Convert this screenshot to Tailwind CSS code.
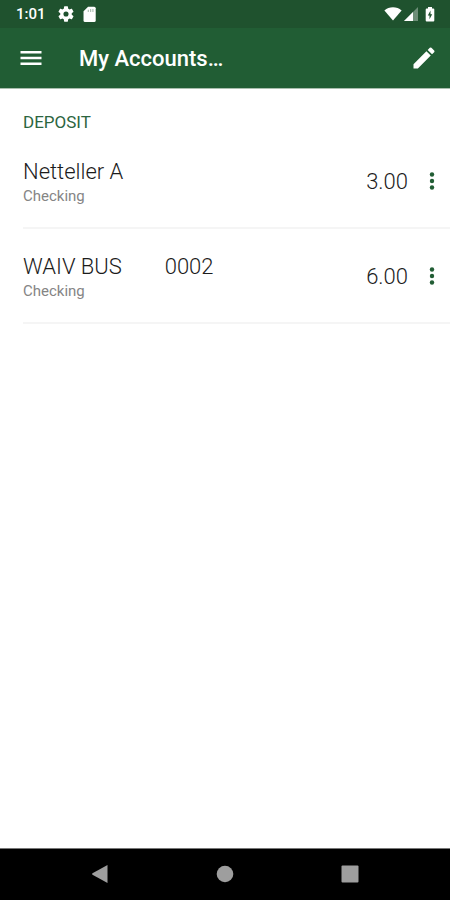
<!DOCTYPE html>
<html lang="en">
<head>
<meta charset="utf-8">
<meta name="viewport" content="width=device-width, initial-scale=1">
<title>My Accounts</title>
<script src="https://cdn.jsdelivr.net/npm/@tailwindcss/browser@4"></script>
</head>
<body class="flex min-h-screen flex-col bg-white font-[Roboto,sans-serif] text-[#1c1c1c]">

<!-- Status bar -->
<div class="flex h-7 items-center bg-[#1f522e] pl-4 pr-[11px] text-white">
  <span class="text-[15px] leading-7 font-medium">1:01</span>
  <svg class="ml-3 size-4" viewBox="2 2 20 20" fill="currentColor" aria-hidden="true"><path d="M19.14 12.94c.04-.3.06-.61.06-.94s-.02-.64-.07-.94l2.03-1.58a.49.49 0 0 0 .12-.61l-1.92-3.32a.49.49 0 0 0-.59-.22l-2.39.96a7 7 0 0 0-1.62-.94l-.36-2.54A.48.48 0 0 0 13.92 2.4h-3.84a.48.48 0 0 0-.48.41l-.36 2.54a7.3 7.3 0 0 0-1.62.94l-2.39-.96a.48.48 0 0 0-.59.22L2.72 8.87a.48.48 0 0 0 .12.61l2.03 1.58a6 6 0 0 0 0 1.88l-2.03 1.58a.49.49 0 0 0-.12.61l1.92 3.32c.12.22.37.29.59.22l2.39-.96c.5.38 1.03.7 1.62.94l.36 2.54c.05.24.24.41.48.41h3.84c.24 0 .44-.17.47-.41l.36-2.54a7 7 0 0 0 1.63-.94l2.39.96c.22.08.47 0 .59-.22l1.92-3.32a.48.48 0 0 0-.12-.61zM12 15.200a3.200 3.200 0 1 1 0-6.400 3.200 3.200 0 0 1 0 6.400z"/></svg>
  <svg class="ml-2 size-4" viewBox="2 1 21 21" fill="currentColor" aria-hidden="true"><path d="M18 2h-8L4 8v12a2 2 0 0 0 2 2h12a2 2 0 0 0 2-2V4a2 2 0 0 0-2-2z"/><path fill="#1f522e" fill-opacity=".35" d="M9.500 6h1.600v3H9.500zM12.500 5h1.600v4h-1.600zM15.500 5h1.600v4h-1.600z"/></svg>
  <svg class="ml-auto h-4 w-[18px]" viewBox="0 0 18 16" fill="currentColor" aria-hidden="true"><path d="M9 14.500.4 4.400C2.800 2.300 5.700 1.300 9 1.300s6.200 1 8.600 3.100z"/></svg>
  <svg class="ml-0.5 size-3.5" viewBox="0 0 14 14" fill="currentColor" aria-hidden="true"><path fill-opacity=".35" d="M0 14 14 0v14z"/><path d="M0 14 9 5v9z"/></svg>
  <svg class="mr-1 ml-[7px] h-4 w-[10px]" viewBox="0 0 10 16" fill="currentColor" aria-hidden="true"><path d="M3 1h4v1.500h1.300a1 1 0 0 1 1 1v11a1 1 0 0 1-1 1H1.700a1 1 0 0 1-1-1v-11a1 1 0 0 1 1-1H3z"/><path fill="#1f522e" d="M5.500 4.500v3.700h1.700l-2.700 5V9.500H2.800z"/></svg>
</div>

<!-- App bar -->
<header class="flex h-[60px] items-center bg-[#215d34] pl-[17px] pr-3 text-white shadow-[0_1px_0_#a9bfae]">
  <button type="button" aria-label="Open menu" class="size-7 pb-px">
    <svg class="size-7" viewBox="0 0 24 24" fill="currentColor"><path d="M3 18h18v-2.200H3zm0-4.900h18v-2.200H3zm0-7.100v2.200h18V6z"/></svg>
  </button>
  <h1 class="ml-[34px] flex-1 pt-0.5 text-[22px] leading-7 font-medium">My Accounts…</h1>
  <button type="button" aria-label="Edit accounts" class="size-7">
    <svg class="size-7" viewBox="0 0 24 24" fill="currentColor"><path d="M3 17.250V21h3.750L17.810 9.940l-3.750-3.750zM20.710 7.040a1 1 0 0 0 0-1.410l-2.340-2.340a1 1 0 0 0-1.410 0l-1.830 1.830 3.750 3.750z"/></svg>
  </button>
</header>

<!-- Account list -->
<main class="flex-1 pl-[23px] pt-[22px]">
  <h2 class="text-[17px] leading-6 text-[#2c6540]">DEPOSIT</h2>
  <ul>
    <li class="flex h-[95px] items-center border-b-2 border-[#f5f5f5] pt-0.5 pr-1">
      <div class="flex-1">
        <p class="text-[22px] leading-7 font-light whitespace-pre">Netteller A</p>
        <p class="text-[15px] leading-5 text-[#858585]">Checking</p>
      </div>
      <span class="text-[22px] leading-7 font-light">3.00</span>
      <button type="button" aria-label="Options for Netteller A" class="ml-2.5 size-7 text-[#215d34]">
        <svg class="size-7" viewBox="0 0 28 28" fill="currentColor"><circle cx="14" cy="6.500" r="2.200"/><circle cx="14" cy="13" r="2.200"/><circle cx="14" cy="19.500" r="2.200"/></svg>
      </button>
    </li>
    <li class="flex h-[95px] items-center border-b-2 border-[#f5f5f5] pt-0.5 pr-1">
      <div class="flex-1">
        <p class="text-[22px] leading-7 font-light whitespace-pre">WAIV BUS        0002</p>
        <p class="text-[15px] leading-5 text-[#858585]">Checking</p>
      </div>
      <span class="text-[22px] leading-7 font-light">6.00</span>
      <button type="button" aria-label="Options for WAIV BUS 0002" class="ml-2.5 size-7 text-[#215d34]">
        <svg class="size-7" viewBox="0 0 28 28" fill="currentColor"><circle cx="14" cy="6.500" r="2.200"/><circle cx="14" cy="13" r="2.200"/><circle cx="14" cy="19.500" r="2.200"/></svg>
      </button>
    </li>
  </ul>
</main>

<!-- System navigation -->
<nav aria-label="System" class="flex h-[52px] items-center justify-center gap-[97px] border-t border-[#777] bg-black pb-0.5 text-[#9e9e9e]">
  <button type="button" aria-label="Back" class="size-7"><svg class="size-7" viewBox="0 0 28 28" fill="currentColor"><path d="M6.500 13.300 21.500 5v18L6.500 14.700q-1-.7 0-1.400z"/></svg></button>
  <button type="button" aria-label="Home" class="size-7"><svg class="size-7" viewBox="0 0 28 28" fill="currentColor"><circle cx="14" cy="14" r="8.300"/></svg></button>
  <button type="button" aria-label="Recent apps" class="size-7"><svg class="size-7" viewBox="0 0 28 28" fill="currentColor"><rect x="5.500" y="5.500" width="17" height="17" rx="1"/></svg></button>
</nav>

</body>
</html>
